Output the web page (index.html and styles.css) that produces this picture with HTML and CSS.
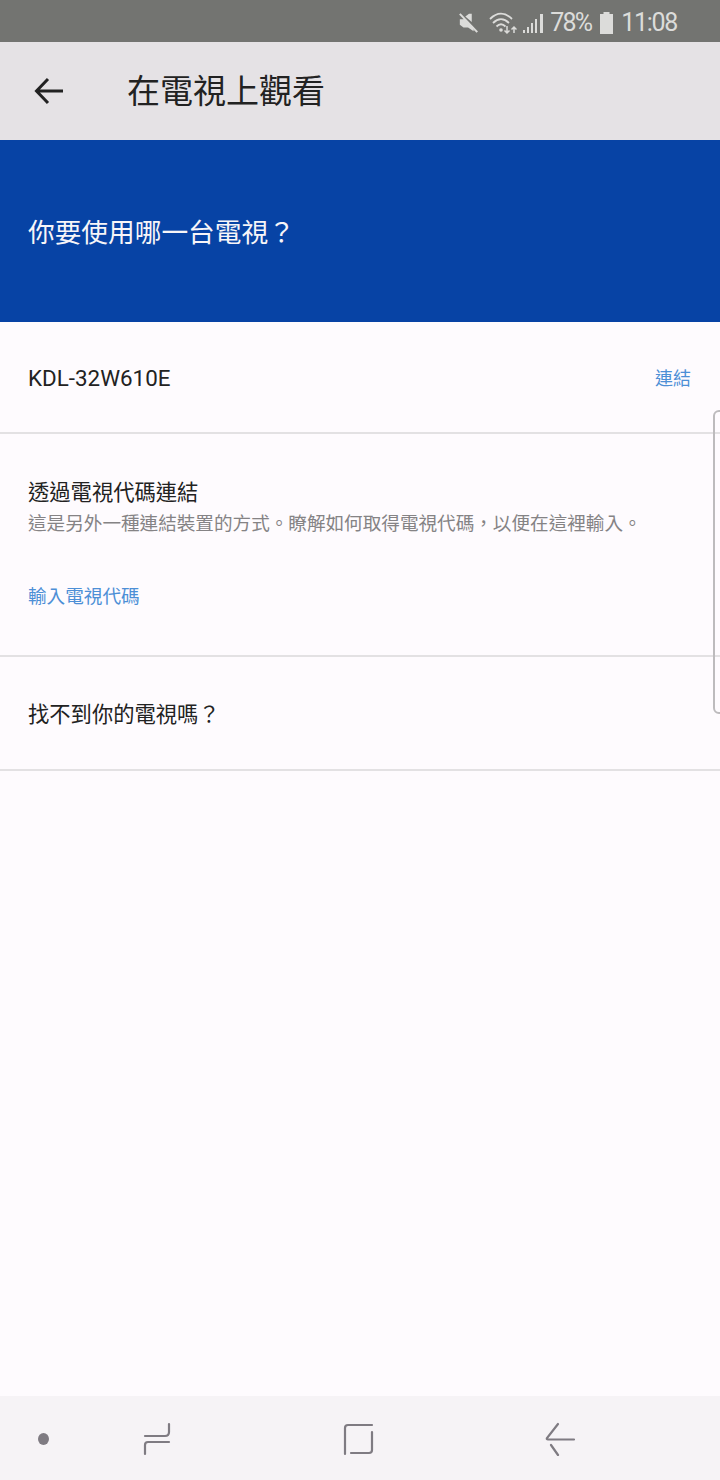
FILE: index.html
```html
<!DOCTYPE html>
<html lang="zh-Hant">
<head>
<meta charset="utf-8">
<title>在電視上觀看</title>
<link rel="stylesheet" href="styles.css">
</head>
<body>
<div class="phone">
  <div class="status">
    <svg class="ic-mute" width="22" height="22" viewBox="0 0 24 24"><path d="M2 8h4l1-1 10 10v4l-6-4H6l-4-3z M8 5l4-3h3v9z" fill="#dcdcda"/><path d="M2 2l19 20" stroke="#dcdcda" stroke-width="2.2" fill="none"/></svg>
    <svg class="ic-wifi" width="28" height="24" viewBox="0 0 28 24" fill="none" stroke="#dcdcda" stroke-width="1.8"><path d="M1 8c7-7 15-7 22 0M4 12c5-5 11-5 16 0M7.500 15.500c3-3 6-3 9 0"/><circle cx="12" cy="19" r="1.800" fill="#dcdcda" stroke="none"/><path d="M18 15v7m-2.500-2.500l2.500 2.500 2.500-2.500M25 22v-6m-2.500 2.500l2.500-2.500 2.500 2.500" stroke-width="1.500"/></svg>
    <svg class="ic-signal" width="22" height="22" viewBox="0 0 22 22" fill="#dcdcda"><path d="M1 18h2v3H1zM5 15h2v6H5zM9 11h2v10H9zM13 7h2v14h-2zM18 2h3v19h-3z"/></svg>
    <span class="pct">78%</span>
    <svg class="ic-batt" width="15" height="22" viewBox="0 0 15 22" fill="#dcdcda"><path d="M4.500 0h6v2h3.500v20H1V2h3.500z"/></svg>
    <span class="time">11:08</span>
  </div>

  <header class="appbar">
    <svg class="back" width="30" height="28" viewBox="0 0 30 28" fill="none" stroke="#222" stroke-width="3"><path d="M29 14H3M14 2L2.500 14 14 26"/></svg>
    <h1 class="title">在電視上觀看</h1>
  </header>

  <section class="banner">
    <h2 class="question">你要使用哪一台電視？</h2>
  </section>

  <main class="content">
    <div class="row row-device">
      <span class="device">KDL-32W610E</span>
      <a class="link link-small">連結</a>
    </div>
    <div class="row-code">
      <div class="row-title">透過電視代碼連結</div>
      <div class="row-sub">這是另外一種連結裝置的方式。瞭解如何取得電視代碼，以便在這裡輸入。</div>
      <a class="link link-code">輸入電視代碼</a>
    </div>
    <div class="row row-missing">
      <span class="row-title">找不到你的電視嗎？</span>
    </div>
  </main>

  <nav class="navbar">
    <span class="dot"></span>
    <svg class="nav-recent" width="32" height="34" viewBox="0 0 32 34" fill="none" stroke="#7f7b82" stroke-width="2.200" stroke-linecap="round"><path d="M28 2v8c0 3-1 4-4 4H4M28 20H7c-2 0-3 1-3 3v9"/></svg>
    <svg class="nav-home" width="32" height="34" viewBox="0 0 32 34" fill="none" stroke="#7f7b82" stroke-width="2.200" stroke-linecap="round"><path d="M3 32V6c0-2 1-3 3-3h24M9 31h18c2 0 3-1 3-3V10"/></svg>
    <svg class="nav-back" width="32" height="34" viewBox="0 0 32 34" fill="none" stroke="#7f7b82" stroke-width="2.200" stroke-linecap="round"><path d="M13 2L2 16c-.5 1 0 1.500 1 1.500h26M6 23l7 10"/></svg>
  </nav>

  <div class="edge-handle"></div>
</div>
</body>
</html>
```
FILE: styles.css
```css
* { box-sizing: border-box; }
html, body { margin: 0; padding: 0; }
body {
  width: 720px;
  height: 1480px;
  background: #fefbfe;
  font-family: "Roboto", "Noto Sans CJK TC", sans-serif;
}
.phone {
  position: relative;
  width: 720px;
  height: 1480px;
  display: flex;
  flex-direction: column;
  overflow: hidden;
}
.status {
  height: 42px;
  flex: none;
  background: #737471;
  color: #dcdcda;
  display: flex;
  align-items: center;
  justify-content: flex-end;
  padding: 3px 43px 0 0;
}
.ic-mute { margin-right: 9px; }
.ic-wifi { margin-right: 5px; }
.ic-signal { margin-right: 6px; }
.pct {
  font-size: 25px;
  letter-spacing: -1.800px;
  margin-right: 8px;
}
.ic-batt { margin-right: 7px; }
.time {
  font-size: 25px;
  letter-spacing: -1.300px;
}

.appbar {
  height: 98px;
  flex: none;
  background: #e5e2e5;
  display: flex;
  align-items: center;
  padding-left: 34px;
}
.back { flex: none; margin-right: 63px; }
.title {
  margin: 0;
  font-size: 33px;
  line-height: 1;
  font-weight: 400;
  color: #222;
}

.banner {
  height: 182px;
  flex: none;
  background: #0743a5;
  display: flex;
  align-items: center;
  padding: 4px 28px 0;
}
.question {
  margin: 0;
  font-size: 26.700px;
  line-height: 1;
  font-weight: 400;
  color: #f7f5f8;
}

.content { flex: 1; }
.row {
  display: flex;
  align-items: center;
  justify-content: space-between;
  padding: 0 29px 0 28px;
  border-bottom: 2px solid #e3e1e3;
}
.row-device { height: 112px; }
.device { font-size: 22.400px; padding-top: 2px; color: #222; }
.row-code {
  height: 223px;
  padding: 45px 28px 0;
  border-bottom: 2px solid #e3e1e3;
}
.row-title { font-size: 21.300px; line-height: 28px; color: #222; }
.row-sub {
  margin-top: 4px;
  font-size: 18.600px;
  line-height: 26px;
  color: #858385;
  white-space: nowrap;
}
.link { color: #4d8fd6; }
.link-small { font-size: 18px; }
.link-code {
  display: block;
  margin-top: 47px;
  font-size: 18.600px;
  line-height: 26px;
}
.row-missing { height: 114px; padding-top: 4px; }

.navbar {
  position: relative;
  height: 84px;
  flex: none;
  background: #f6f3f6;
}
.dot {
  position: absolute;
  left: 38px;
  top: 37px;
  width: 11px;
  height: 12px;
  border-radius: 50%;
  background: #7f7b82;
}
.navbar svg { position: absolute; top: 26px; }
.nav-recent { left: 141px; }
.nav-home { left: 342px; }
.nav-back { left: 545px; }

.edge-handle {
  position: absolute;
  left: 713px;
  top: 410px;
  width: 12px;
  height: 304px;
  border: 2px solid #bdbbbd;
  border-radius: 10px;
}
```
